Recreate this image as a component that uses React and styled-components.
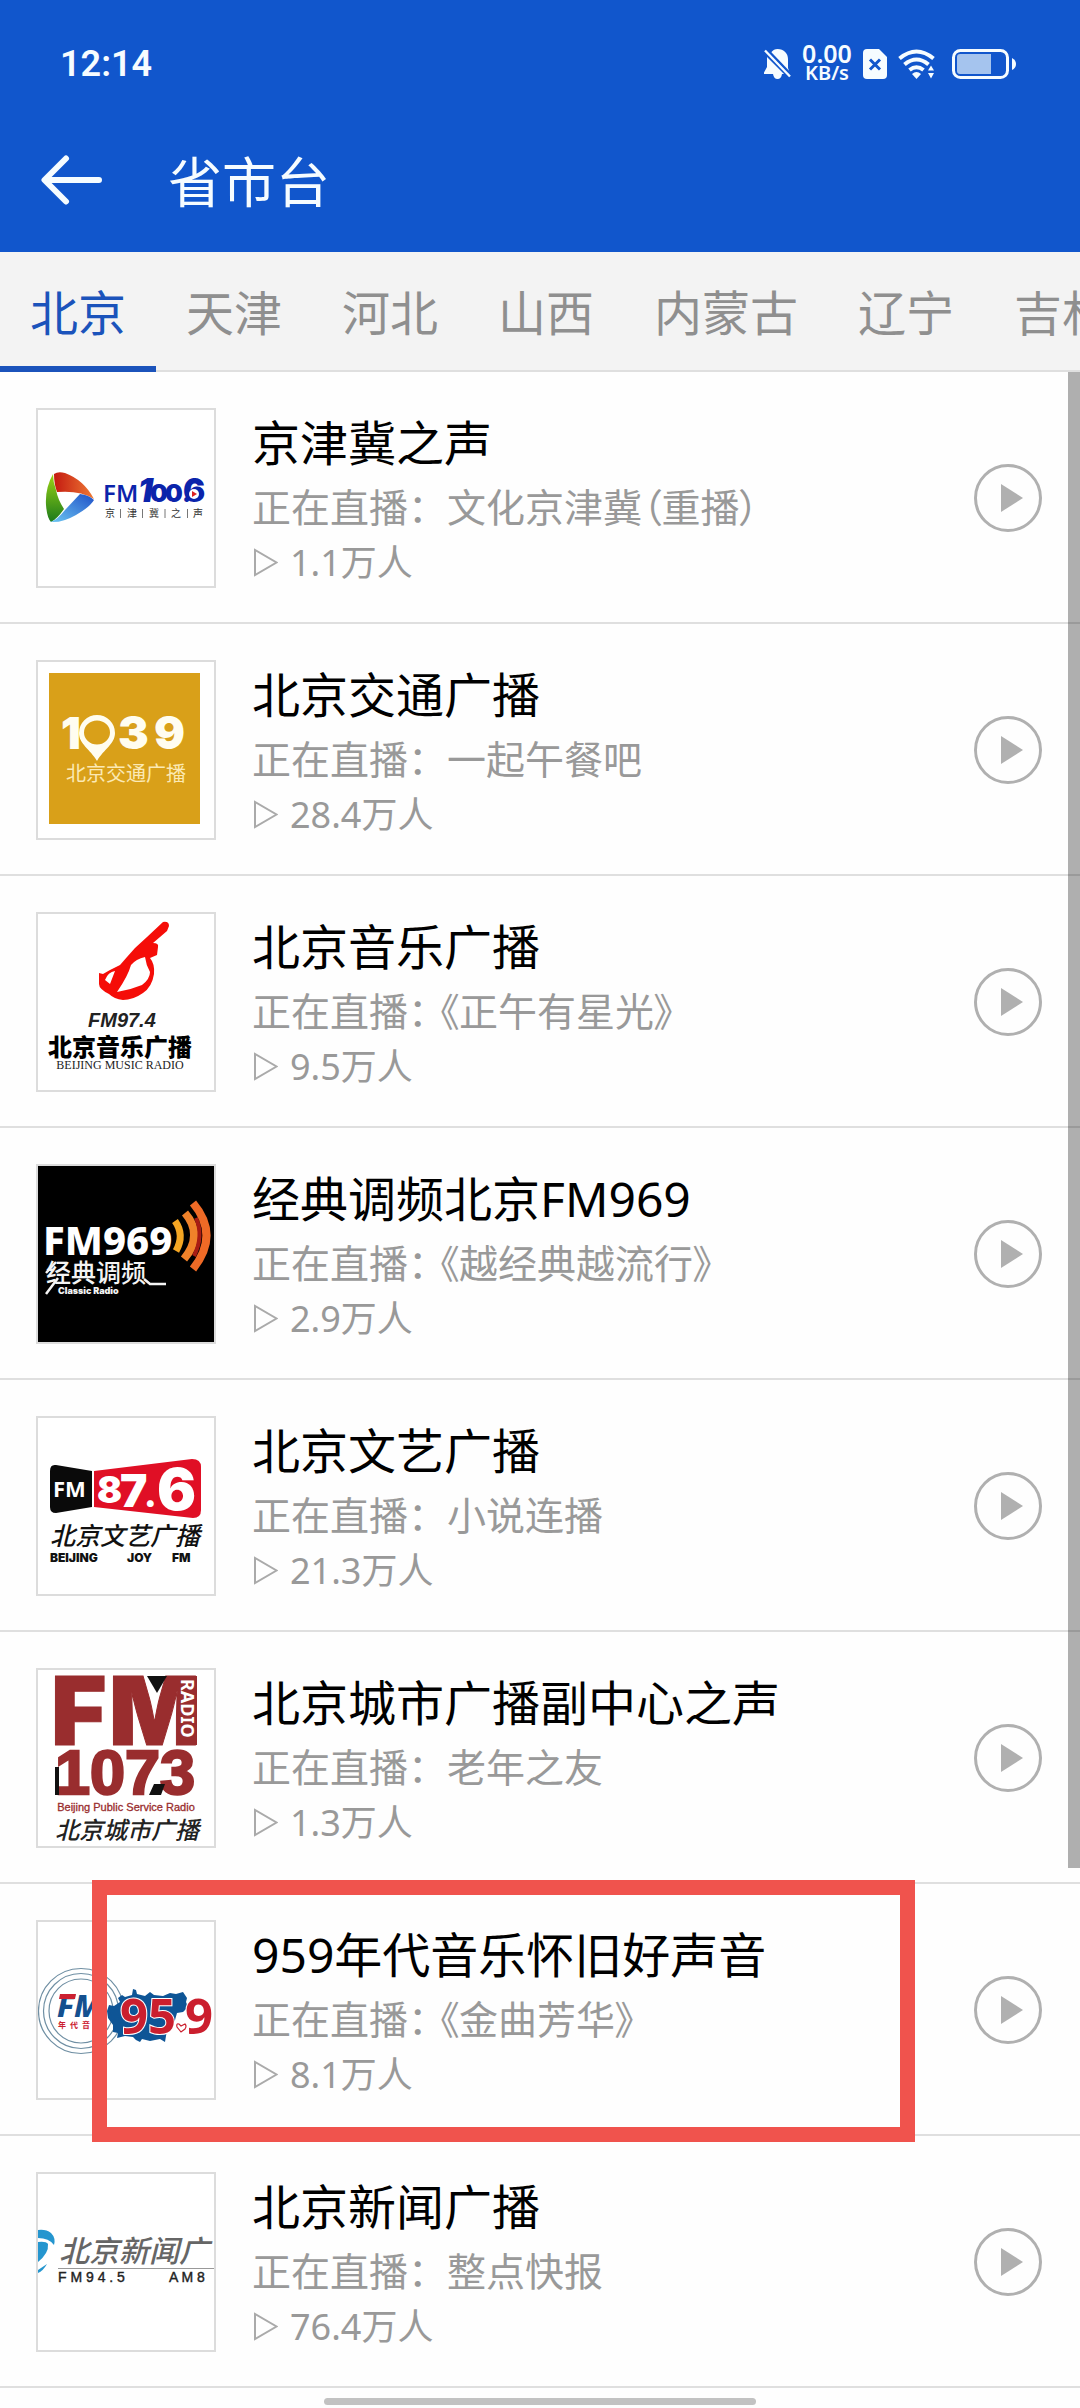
import React, { useState } from "react";
import styled, { createGlobalStyle } from "styled-components";

const GlobalStyle = createGlobalStyle`
  * { box-sizing: border-box; }
  body {
    margin: 0;
    background: #fefefe;
    font-family: "Noto Sans", "Noto Sans CJK SC", sans-serif;
    overflow-x: hidden;
  }
  button { font-family: inherit; border: 0; padding: 0; margin: 0; background: none; cursor: pointer; }
  svg { display: block; }
`;

const Page = styled.div`
  display: flex;
  flex-direction: column;
  min-height: 100vh;
`;

const TopArea = styled.header`
  background: #1156cc;
  color: #f6fcff;
`;

const StatusBar = styled.div`
  display: flex;
  align-items: center;
  justify-content: space-between;
  height: 108px;
  padding: 20px 64px 0 60px;
`;

const Clock = styled.time`
  font-family: Roboto, "Noto Sans", sans-serif;
  font-size: 36px;
  line-height: 40px;
  font-weight: 600;
`;

const StatusIcons = styled.div`
  display: flex;
  align-items: center;
  gap: 11px;
`;

const NetSpeed = styled.div`
  display: flex;
  flex-direction: column;
  align-items: center;
  width: 50px;
  padding-bottom: 2px;
  font-weight: 600;
`;

const SpeedLine = styled.span`
  font-size: ${(p) => (p.$small ? 20 : 25)}px;
  line-height: 20px;
`;

const BatterySlot = styled.div`
  padding-left: 6px;
`;

const TitleBar = styled.div`
  display: flex;
  align-items: center;
  gap: 66px;
  height: 144px;
  padding-left: 41px;
`;

const PageTitle = styled.h1`
  margin: 0;
  padding-top: 4px;
  font-size: 54px;
  line-height: 72px;
  font-weight: 400;
`;

const BackButton = styled.button`
  color: inherit;
`;

const Tabs = styled.nav`
  display: flex;
  height: 120px;
  overflow: hidden;
  background: #f3f3f3;
  box-shadow: inset 0 -2px 0 #dfdfdf;
`;

const Tab = styled.button`
  flex: none;
  padding: 8px 30px 0;
  font-size: 48px;
  line-height: 106px;
  color: ${(p) => (p.$active ? "#1b53bb" : "#8f8f8f")};
  border-bottom: 6px solid ${(p) => (p.$active ? "#1b53bb" : "transparent")};
`;

const ListArea = styled.main`
  position: relative;
`;

const StationList = styled.ul`
  list-style: none;
  margin: 0;
  padding: 0;
`;

const Station = styled.li`
  position: relative;
  display: flex;
  align-items: center;
  gap: 36px;
  padding: 36px 38px 34px 36px;
  border-bottom: 2px solid #dfdfdf;
`;

const Cover = styled.div`
  flex: none;
  width: 180px;
  height: 180px;
  border: 2px solid #dcdcdc;
  background: #fff;
`;

const Info = styled.div`
  flex: 1;
  min-width: 0;
`;

const Name = styled.h2`
  margin: 0;
  font-size: 48px;
  line-height: 70px;
  font-weight: 400;
  color: #000;
  white-space: nowrap;
`;

const NowPlaying = styled.p`
  margin: 0;
  font-size: 39px;
  line-height: 58px;
  color: #999;
  white-space: nowrap;
  font-feature-settings: ${(p) => (p.$quoted ? '"halt"' : "normal")};
`;

const Program = styled.span`
  padding-left: ${(p) => (p.$quoted ? 12 : 0)}px;
  font-feature-settings: "palt";
`;

const Listeners = styled.p`
  display: flex;
  align-items: center;
  gap: 12px;
  margin: 0;
  padding-top: 2px;
  font-size: 36px;
  line-height: 50px;
  color: #999;
`;

const PlayButton = styled.button`
  flex: none;
`;

const Highlight = styled.div`
  position: absolute;
  z-index: 2;
  top: -4px;
  bottom: -8px;
  left: 92px;
  right: 165px;
  border: 15px solid #f0534d;
  pointer-events: none;
`;

const ScrollThumb = styled.div`
  position: absolute;
  top: 0;
  right: 0;
  width: 12px;
  height: 1496px;
  background: rgba(0, 0, 0, 0.31);
`;

const HomeArea = styled.footer`
  display: flex;
  justify-content: center;
  padding: 10px 0 3px;
`;

const HomeIndicator = styled.div`
  width: 40%;
  height: 7px;
  border-radius: 4px;
  background: #c2c2c2;
`;

const BellOffIcon = () => (
  <svg width="27" height="30" viewBox="0 0 27 30" fill="currentColor" aria-hidden="true">
    <path d="M7 3.500C9 1 11 0 13.500 0C20 0 24 4.500 24 10V19L26 24.500Z" />
    <path d="M3 8V18L0 23.500V25H9C9.500 28 11 30 13.500 30C16 30 17.500 28.500 18 25H20Z" />
    <path d="M1 1.500L26 27.500" stroke="currentColor" strokeWidth="2.400" />
    <path d="M3 0L27 25" stroke="#1156cc" strokeWidth="1.800" />
  </svg>
);

const SimIcon = () => (
  <svg width="24" height="30" viewBox="0 0 24 30" aria-hidden="true">
    <path d="M4 0H16L24 8V26Q24 30 20 30H4Q0 30 0 26V4Q0 0 4 0Z" fill="currentColor" />
    <path d="M7 10.500L17 20.500M17 10.500L7 20.500" stroke="#1156cc" strokeWidth="3" />
  </svg>
);

const WifiIcon = () => (
  <svg width="37" height="30" viewBox="0 0 37 30" fill="none" stroke="currentColor" strokeWidth="4" aria-hidden="true">
    <path d="M1.500 9.500Q18.500 -4.500 35.500 9.500" />
    <path d="M6.500 15.500Q18.500 5.500 30.500 15.500" />
    <path d="M11.500 21Q18.500 15.500 25.500 21" />
    <path d="M14 25Q18.500 21 23 25L18.500 30Z" fill="currentColor" stroke="none" />
    <path d="M30 21.500L33 16.500L36 21.500ZM30 24L33 29.500L36 24Z" fill="currentColor" stroke="none" />
  </svg>
);

const BatteryIcon = () => (
  <svg width="64" height="30" viewBox="0 0 64 30" aria-hidden="true">
    <rect x="1.500" y="1.500" width="54" height="27" rx="7" fill="none" stroke="currentColor" strokeWidth="3" />
    <path d="M5 8Q5 5 8 5H39V25H8Q5 25 5 22Z" fill="#a5c4ee" />
    <path d="M60 9Q64 11 64 15Q64 19 60 21Z" fill="currentColor" />
  </svg>
);

const BackIcon = () => (
  <svg width="61" height="50" viewBox="0 0 61 50" fill="none" stroke="currentColor" strokeWidth="6" strokeLinecap="round" strokeLinejoin="round" aria-hidden="true">
    <path d="M25 3.500L3.500 25L25 46.500M4 25H58" />
  </svg>
);

const PlayIcon = () => (
  <svg width="68" height="68" viewBox="0 0 68 68" aria-hidden="true">
    <circle cx="34" cy="34" r="32.500" fill="none" stroke="#b0b0b0" strokeWidth="3" />
    <path d="M27 20V48L49 34Z" fill="#b0b0b0" />
  </svg>
);

const ListenIcon = () => (
  <svg width="26" height="30" viewBox="0 0 26 30" aria-hidden="true">
    <path d="M3 2V27L24.500 14.500Z" fill="none" stroke="#aaa" strokeWidth="2" />
  </svg>
);

const Art = ({ children, label }) => (
  <svg width="176" height="176" viewBox="0 0 176 176" role="img" aria-label={label}>
    {children}
  </svg>
);

const SansText = styled.text`
  font-family: "Noto Sans", "Noto Sans CJK SC", sans-serif;
`;

const HanText = styled.text`
  font-family: "Noto Sans CJK SC", sans-serif;
`;

const WideText = styled.text`
  font-family: Inter, "Noto Sans", sans-serif;
  font-weight: 900;
`;

const GothicText = styled.text`
  font-family: "Liberation Sans", sans-serif;
`;

const SerifText = styled.text`
  font-family: "Liberation Serif", serif;
`;

const LogoJJJ = () => (
  <Art label="FM100.6">
    <defs>
      <linearGradient id="jr" x1="0" x2="1"><stop offset="0" stopColor="#c41a10" /><stop offset="1" stopColor="#ee7a35" /></linearGradient>
      <linearGradient id="jg" x1="0" y1="0" x2="0" y2="1"><stop offset="0" stopColor="#9bd414" /><stop offset="1" stopColor="#1c7a1c" /></linearGradient>
      <linearGradient id="jb" x1="0" y1="1" x2="1" y2="0"><stop offset="0" stopColor="#6cc6f2" /><stop offset="1" stopColor="#1f50c8" /></linearGradient>
    </defs>
    <path d="M16 64Q20 61 27 63Q46 70 56 89Q42 80 19 82Q16 74 16 64Z" fill="url(#jr)" />
    <path d="M15 64Q7 78 8 95Q9 108 13 112Q19 109 26 99Q20 90 18 80Q15 72 15 64Z" fill="url(#jg)" />
    <path d="M56 90Q52 97 38 105Q24 113 13 112Q20 109 27 100L42 84Q51 85 56 90Z" fill="url(#jb)" />
    <g fill="#0b24ab">
      <SansText x="65" y="92" fontSize="24" fontWeight="600">FM</SansText>
      <WideText x="100" y="92" fontSize="33" fontStyle="italic">1</WideText>
      <WideText x="112" y="92" fontSize="25">0</WideText>
      <WideText x="127" y="92" fontSize="25">0.</WideText>
      <WideText x="145" y="92" fontSize="33">6</WideText>
    </g>
    <circle cx="156" cy="84" r="5" fill="#fff" />
    <path d="M154 81V87L159 84Z" fill="#d22" />
    {["京", "津", "冀", "之", "声"].map((c, i) => (
      <HanText key={c} x={67 + i * 22} y="107" fontSize="10" fill="#333">{c}</HanText>
    ))}
    <path d="M82.500 99V108M104.500 99V108M127 99V108M149.500 99V108" stroke="#777" strokeWidth="1" />
  </Art>
);

const Logo1039 = () => (
  <Art label="1039">
    <rect x="11" y="11" width="151" height="151" fill="#d9a019" />
    <g fill="#fffdf0">
      <WideText x="23" y="87" fontSize="44">1</WideText>
      <path fillRule="evenodd" d="M59 53A18 18 0 0 1 77 71C77 82 66 87 59 99C52 87 41 82 41 71A18 18 0 0 1 59 53ZM59 58.500A13 12 0 1 0 59 82.500A13 12 0 1 0 59 58.500Z" />
      <WideText x="80" y="87" fontSize="46">3</WideText>
      <WideText x="116" y="87" fontSize="46">9</WideText>
    </g>
    <HanText x="28" y="119" fontSize="20" fontWeight="400" fill="#fbe9b4">北京交通广播</HanText>
  </Art>
);

const LogoMusic = () => (
  <Art label="FM97.4">
    <path
      fillRule="evenodd"
      d="M125 8Q131 7 131 12L129 17L115 29Q121 29 120 33L119 41L112 44Q117 50 116 60Q114 73 105 79Q95 86 85 86Q76 85 71 80Q61 75 61 70V59L65 60L72 56L82 51L89 43L97 34L109 23ZM107 43Q98 45 93 51Q90 62 79 78Q92 76 104 71Q112 65 112 58Q108 51 107 43ZM77 57Q70 58 67 66L72 70Z"
      fill="#f50d08"
    />
    <GothicText x="50" y="113" fontSize="20" fontWeight="700" fontStyle="italic" fill="#222">FM97.4</GothicText>
    <HanText x="10" y="142" fontSize="24" fontWeight="900" fill="#000">北京音乐广播</HanText>
    <SerifText x="82" y="155" fontSize="12" textAnchor="middle" fill="#222">BEIJING MUSIC RADIO</SerifText>
  </Art>
);

const Logo969 = () => (
  <Art label="FM969">
    <rect width="176" height="176" fill="#000" />
    <SansText x="5" y="89" fontSize="40" fontWeight="800" fill="#fff">FM969</SansText>
    <g fill="none">
      <path d="M137 55Q147 69 138 85" stroke="#f5a623" strokeWidth="7" />
      <path d="M147 47Q166 69 146 93" stroke="#f0822a" strokeWidth="8" />
      <path d="M158 52Q166 70 156 90" stroke="#a81c14" strokeWidth="4" />
      <path d="M155 37Q182 69 155 103" stroke="#ef6a26" strokeWidth="8" />
    </g>
    <HanText x="8" y="116" fontSize="25" fontWeight="500" fill="#f4f4f4">经典调频</HanText>
    <path d="M18 96L8 107M8 128L20 112M106 113L112 118H128" fill="none" stroke="#f4f4f4" strokeWidth="2.500" />
    <WideText x="20" y="128" fontSize="9" fill="#f4f4f4">Classic Radio</WideText>
  </Art>
);

const Logo876 = () => (
  <Art label="FM87.6">
    <path d="M12 53Q12 46 18 47L54 53V89L18 95Q12 95 12 89Z" fill="#0a0a0a" />
    <path d="M56 53L154 41Q163 41 163 49V92Q163 100 155 100L56 89Z" fill="#e00f25" />
    <g fill="#fff">
      <SansText x="15" y="79" fontSize="22" fontWeight="700">FM</SansText>
      <WideText x="59" y="85" fontSize="37">8</WideText>
      <WideText x="82" y="89" fontSize="46">7</WideText>
      <WideText x="106" y="89" fontSize="34">.</WideText>
      <WideText x="119" y="92" fontSize="58">6</WideText>
    </g>
    <HanText x="12" y="127" fontSize="25" fontWeight="500" fontStyle="italic" fill="#111">北京文艺广播</HanText>
    <WideText x="12" y="144" fontSize="12" fill="#111">BEIJING</WideText>
    <WideText x="89" y="144" fontSize="12" fill="#111">JOY</WideText>
    <WideText x="134" y="144" fontSize="12" fill="#111">FM</WideText>
  </Art>
);

const Logo1073 = () => (
  <Art label="FM1073">
    <g fill="#992d2e" stroke="#992d2e">
      <WideText x="13" y="75" fontSize="95">F</WideText>
      <WideText x="71" y="75" fontSize="95">M</WideText>
      <GothicText x="17" y="124" fontSize="63" fontWeight="700" strokeWidth="2.500">1073</GothicText>
      <GothicText x="88" y="141" fontSize="11" textAnchor="middle" strokeWidth="0.300">Beijing Public Service Radio</GothicText>
    </g>
    <path d="M109 6H129L119 23Z" fill="#111" />
    <rect x="140" y="6" width="19" height="69" fill="#992d2e" />
    <SansText transform="translate(143 9) rotate(90)" fontSize="18" fontWeight="700" fill="#fff">RADIO</SansText>
    <path d="M17 97H21V125H17ZM116 114H127L123 125H111Z" fill="#111" />
    <HanText x="17" y="169" fontSize="24" fontWeight="500" fontStyle="italic" fill="#222">北京城市广播</HanText>
  </Art>
);

const Logo959 = () => (
  <Art label="FM95.9">
    <g fill="#fff" stroke="#6f8fa3" strokeWidth="1.200">
      <circle cx="43" cy="89" r="42.500" />
      <circle cx="43" cy="89" r="37.500" />
      <circle cx="43" cy="89" r="32" />
    </g>
    <SansText x="19" y="95" fontSize="31" fontWeight="800" fontStyle="italic" fill="#14508f">FM</SansText>
    <path d="M22 72H38L37 77H21Z" fill="#cc2030" />
    <HanText x="20" y="106" fontSize="8" fontWeight="700" fill="#cc2030">年</HanText>
    <HanText x="32" y="106" fontSize="8" fontWeight="700" fill="#cc2030">代</HanText>
    <HanText x="44" y="106" fontSize="8" fontWeight="700" fill="#cc2030">音</HanText>
    <path d="M71 83L76 84L82 80L80 76L84 73L87 75L94 73L95 67L98 68L99 72L107 74L112 70L116 73L125 74L132 71L138 72L145 70L149 76L148 80L150 85L145 90L139 91L137 98L135 102L129 108L127 120L122 117L112 119L104 117L102 120L98 118L95 115L87 114L79 116L80 111L75 110V103L70 96L69 89Z" fill="#0e5596" />
    <g fill="#cb1f2e" stroke="#fff" strokeWidth="2" paintOrder="stroke" fontWeight="700">
      <SansText x="82" y="112" fontSize="49">95</SansText>
      <SansText x="147" y="112" fontSize="49">9</SansText>
    </g>
    <path d="M143 110L139 105Q138 101 141 102L143 104L147 102Q149 104 147 107Z" fill="#fff" stroke="#cb1f2e" strokeWidth="1.200" />
  </Art>
);

const LogoNews = () => (
  <Art label="FM94.5">
    <path d="M0 56Q8 55 13 59Q18 64 16 71Q11 64 0 64Z" fill="#2596cf" />
    <path d="M0 68Q8 67 10 70Q11 79 0 88Z" fill="#2596cf" />
    <path d="M9 90Q5 97 0 99V96Z" fill="#2596cf" />
    <HanText x="21" y="88" fontSize="30" fontWeight="500" fontStyle="italic" fill="#666">北京新闻广</HanText>
    <path d="M20 94.500H176" stroke="#999" strokeWidth="1" />
    <GothicText x="20" y="108" fontSize="14" fill="#222" stroke="#222" strokeWidth="0.400">F M 9 4 . 5</GothicText>
    <GothicText x="131" y="108" fontSize="14" fill="#222" stroke="#222" strokeWidth="0.400">A M 8</GothicText>
  </Art>
);

const stations = [
  { name: "京津冀之声", program: "文化京津冀（重播）", count: "1.1万人", Logo: LogoJJJ },
  { name: "北京交通广播", program: "一起午餐吧", count: "28.4万人", Logo: Logo1039 },
  { name: "北京音乐广播", program: "《正午有星光》", count: "9.5万人", Logo: LogoMusic },
  { name: "经典调频北京FM969", program: "《越经典越流行》", count: "2.9万人", Logo: Logo969 },
  { name: "北京文艺广播", program: "小说连播", count: "21.3万人", Logo: Logo876 },
  { name: "北京城市广播副中心之声", program: "老年之友", count: "1.3万人", Logo: Logo1073 },
  { name: "959年代音乐怀旧好声音", program: "《金曲芳华》", count: "8.1万人", Logo: Logo959, marked: true },
  { name: "北京新闻广播", program: "整点快报", count: "76.4万人", Logo: LogoNews },
];

const provinces = ["北京", "天津", "河北", "山西", "内蒙古", "辽宁", "吉林"];

const isQuoted = (title) => title.startsWith("《");

export default function App() {
  const [active, setActive] = useState("北京");
  return (
    <Page>
      <GlobalStyle />
      <TopArea>
        <StatusBar>
          <Clock>12:14</Clock>
          <StatusIcons>
            <BellOffIcon />
            <NetSpeed>
              <SpeedLine>0.00</SpeedLine>
              <SpeedLine $small>KB/s</SpeedLine>
            </NetSpeed>
            <SimIcon />
            <WifiIcon />
            <BatterySlot>
              <BatteryIcon />
            </BatterySlot>
          </StatusIcons>
        </StatusBar>
        <TitleBar>
          <BackButton aria-label="返回">
            <BackIcon />
          </BackButton>
          <PageTitle>省市台</PageTitle>
        </TitleBar>
      </TopArea>
      <Tabs>
        {provinces.map((p) => (
          <Tab key={p} $active={p === active} onClick={() => setActive(p)}>
            {p}
          </Tab>
        ))}
      </Tabs>
      <ListArea>
        <StationList>
          {stations.map(({ name, program, count, Logo, marked }) => (
            <Station key={name}>
              <Cover>
                <Logo />
              </Cover>
              <Info>
                <Name>{name}</Name>
                <NowPlaying $quoted={isQuoted(program)}>
                  正在直播：<Program $quoted={isQuoted(program)}>{program}</Program>
                </NowPlaying>
                <Listeners>
                  <ListenIcon />
                  {count}
                </Listeners>
              </Info>
              <PlayButton aria-label={`播放${name}`}>
                <PlayIcon />
              </PlayButton>
              {marked && <Highlight />}
            </Station>
          ))}
        </StationList>
        <ScrollThumb />
      </ListArea>
      <HomeArea>
        <HomeIndicator />
      </HomeArea>
    </Page>
  );
}
